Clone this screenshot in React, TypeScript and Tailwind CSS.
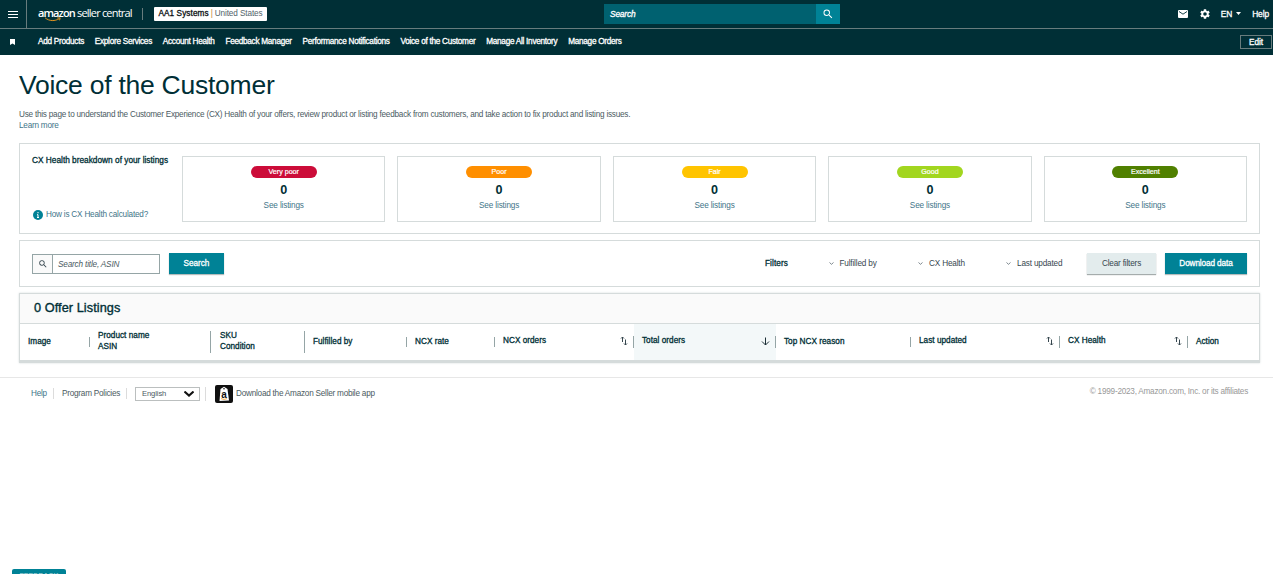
import type { ReactNode } from 'react';

const navLinks = [
  'Add Products',
  'Explore Services',
  'Account Health',
  'Feedback Manager',
  'Performance Notifications',
  'Voice of the Customer',
  'Manage All Inventory',
  'Manage Orders',
];

const healthCards = [
  { label: 'Very poor', count: 0, color: 'bg-[#cc0c39]' },
  { label: 'Poor', count: 0, color: 'bg-[#ff8f00]' },
  { label: 'Fair', count: 0, color: 'bg-[#ffc400]' },
  { label: 'Good', count: 0, color: 'bg-[#a2d61f]' },
  { label: 'Excellent', count: 0, color: 'bg-[#508000]' },
];

// medium weight: regular glyphs with a thin outline
const medium = '[-webkit-text-stroke:0.3px_currentColor]';

function SearchIcon({ className }: { className?: string }) {
  return (
    <svg viewBox="0 0 24 24" fill="currentColor" className={className}>
      <path d="M15.5 14h-.79l-.28-.27A6.471 6.471 0 0 0 16 9.5 6.5 6.5 0 1 0 9.5 16c1.61 0 3.09-.59 4.23-1.57l.27.28v.79l5 4.99L20.49 19l-4.99-5zm-6 0C7.01 14 5 11.99 5 9.5S7.01 5 9.5 5 14 7.01 14 9.5 11.99 14 9.5 14z" />
    </svg>
  );
}

function SortIcon() {
  return (
    <svg viewBox="0 0 8 10" fill="none" stroke="#37474f" strokeWidth="1" className="w-2 h-2.5 mb-0.5 shrink-0">
      <path d="M2.5 6V1M1 2.5L2.5 1L4 2.5M5.5 3.5V9M4 7.5L5.5 9L7 7.5" />
    </svg>
  );
}

function ArrowDownIcon() {
  return (
    <svg viewBox="0 0 9 9" fill="none" stroke="#1c2f36" strokeWidth="1" className="w-[9px] h-[9px] mb-0.5 shrink-0">
      <path d="M4.5 0.5V8M1 4.5L4.5 8L8 4.5" />
    </svg>
  );
}

function TopBar() {
  return (
    <header className="h-[29px] flex items-center bg-[#002f36] border-b border-[#687c7d] text-white">
      <button className="w-[27px] h-7 flex items-center justify-center border-r border-[#687c7d]" aria-label="Menu">
        <svg viewBox="0 0 10 7" className="w-2.5 h-[7px]" stroke="white" strokeWidth="1">
          <path d="M0 0.5H10M0 3.5H10M0 6.5H10" />
        </svg>
      </button>
      <a href="#" className="relative ml-[11px] w-[95px] h-7 flex items-center gap-[3px] pb-[2px] font-['Open_Sans'] text-[11px] whitespace-nowrap">
        <span className="w-[36px] font-semibold tracking-[-0.9px]">amazon</span>
        <span className="tracking-[-0.8px]">seller central</span>
        <svg viewBox="0 0 20 6" fill="none" className="absolute left-[5px] top-[17px] w-5 h-[5px]">
          <path d="M0.5 1C5.5 5.2 12.5 5.2 17.5 2M15 1.2L18.6 1L17.8 4" stroke="#f19a1f" strokeWidth="1.1" />
        </svg>
      </a>
      <span className="ml-[9px] w-px h-3 bg-[#687c7d]" />
      <button className="ml-[11px] w-[113px] h-[14px] flex items-center justify-center bg-white rounded-[1px] pt-px text-[8.2px] tracking-[-0.1px] whitespace-nowrap text-[#52636b]">
        <span className={`${medium} tracking-[0.1px] text-[#0b0f12]`}>AA1 Systems</span>
        <span className="mx-[2px] text-[#c07b3a]">|</span>
        <span>United States</span>
      </button>
      <div className="ml-[337px] flex h-5">
        <div className={`${medium} w-[212px] pl-1.5 flex items-center bg-[#006170] text-[8.4px] italic tracking-[-0.2px]`}>Search</div>
        <button className="w-6 flex items-center justify-center bg-[#008296]" aria-label="Search">
          <SearchIcon className="w-3 h-3" />
        </button>
      </div>
      <div className={`${medium} ml-auto flex items-center pr-1 text-[8.4px] tracking-[-0.1px]`}>
        <svg viewBox="0 0 10 8" className="w-2.5 h-2 mr-3">
          <rect width="10" height="8" rx="1" fill="white" />
          <path d="M1 1.5L5 4.2L9 1.5" fill="none" stroke="#002f36" strokeWidth="0.9" />
        </svg>
        <svg viewBox="2 2 20 20" fill="white" className="w-2.5 h-2.5 mr-[11px]">
          <path d="M19.14 12.94c.04-.3.06-.61.06-.94 0-.32-.02-.64-.07-.94l2.03-1.58a.49.49 0 0 0 .12-.61l-1.92-3.32a.488.488 0 0 0-.59-.22l-2.39.96c-.5-.38-1.03-.7-1.62-.94l-.36-2.54a.484.484 0 0 0-.48-.41h-3.84c-.24 0-.43.17-.47.41l-.36 2.54c-.59.24-1.13.57-1.62.94l-2.39-.96c-.22-.08-.47 0-.59.22L2.74 8.87c-.12.21-.08.47.12.61l2.03 1.58c-.05.3-.09.63-.09.94s.02.64.07.94l-2.03 1.58a.49.49 0 0 0-.12.61l1.92 3.32c.12.22.37.29.59.22l2.39-.96c.5.38 1.03.7 1.62.94l.36 2.54c.05.24.24.41.48.41h3.84c.24 0 .44-.17.47-.41l.36-2.54c.59-.24 1.13-.56 1.62-.94l2.39.96c.22.08.47 0 .59-.22l1.92-3.32a.49.49 0 0 0-.12-.61l-2.01-1.58zM12 15.6A3.6 3.6 0 1 1 12 8.4a3.6 3.6 0 0 1 0 7.2z" />
        </svg>
        <span>EN</span>
        <svg viewBox="0 0 5 3" fill="white" className="w-[5px] h-[3px] ml-1 mr-[11px]">
          <path d="M0 0H5L2.5 3Z" />
        </svg>
        <span>Help</span>
      </div>
    </header>
  );
}

function NavBar() {
  return (
    <nav className={`${medium} h-[26px] flex items-center bg-[#002f36] text-white text-[8.2px]`}>
      <svg viewBox="0 0 5 6" fill="white" className="ml-[10px] mr-[23px] w-[5px] h-1.5">
        <path d="M0 0H5V6L2.5 4.5L0 6Z" />
      </svg>
      <div className="flex gap-[10.8px] tracking-[-0.265px] whitespace-nowrap">
        {navLinks.map((link) => (
          <a key={link} href="#">
            {link}
          </a>
        ))}
      </div>
      <button className="ml-auto mr-px w-8 h-[14px] border border-[#687c7d] leading-[11px]">Edit</button>
    </nav>
  );
}

function HealthBreakdown() {
  return (
    <section className="h-[91px] flex border border-[#d5dbdb] py-3 px-3">
      <div className="w-[150px] flex flex-col justify-between whitespace-nowrap">
        <h2 className={`${medium} leading-2 text-[8.3px] tracking-[0px]`}>CX Health breakdown of your listings</h2>
        <a href="#" className="-mb-px flex items-center text-[8.2px] leading-3.5 tracking-[-0.21px] text-[#3f7589]">
          <svg viewBox="0 0 10 10" className="ml-px mr-[3px] w-2.5 h-2.5">
            <circle cx="5" cy="5" r="5" fill="#008296" />
            <path d="M5 2V3.3M4 4.7H5V7.5M4 7.5H6" fill="none" stroke="white" strokeWidth="1" />
          </svg>
          How is CX Health calculated?
        </a>
      </div>
      <div className="flex-1 flex gap-3">
        {healthCards.map((card) => (
          <div key={card.label} className="flex-1 h-[66px] flex flex-col items-center border border-[#d5dbdb] pt-[9px]">
            <span className={`w-[66px] h-3 rounded-full text-center text-[7.1px] leading-3 text-white [-webkit-text-stroke:0.2px_currentColor] ${card.color}`}>
              {card.label}
            </span>
            <span className="mt-[5px] text-[12.6px] leading-[15px] font-bold">{card.count}</span>
            <a href="#" className="mt-[3px] text-[8.2px] leading-2.5 tracking-[-0.14px] text-[#3f7589]">
              See listings
            </a>
          </div>
        ))}
      </div>
    </section>
  );
}

function FilterMenu({ label, width }: { label: string; width: string }) {
  return (
    <button className={`${width} flex items-center whitespace-nowrap text-[#37474f]`}>
      <svg viewBox="0 0 5 3" fill="none" stroke="#5d6b72" strokeWidth="0.8" className="w-[5px] h-[3px] mr-[6px]">
        <path d="M0.5 0.5L2.5 2.3L4.5 0.5" />
      </svg>
      <span className="pt-px">{label}</span>
    </button>
  );
}

function FilterBar() {
  return (
    <section className="mt-1.5 h-[47px] flex items-center border border-[#d5dbdb] px-3 text-[8.2px] tracking-[-0.17px]">
      <div className="w-32 h-5 flex border border-[#95a5a6]">
        <span className="w-5 flex items-center justify-center border-r border-[#95a5a6] bg-[#fafafa]">
          <SearchIcon className="w-2.5 h-2.5 text-[#37474f]" />
        </span>
        <span className="pl-[5px] leading-[19px] italic text-[#4b5b62]">Search title, ASIN</span>
      </div>
      <button className={`${medium} ml-[9px] w-[55px] h-[21px] pt-px bg-[#008296] shadow-[0_1px_1px_#b5bcbc] text-white tracking-[-0.03px]`}>Search</button>
      <span className={`${medium} ml-auto w-[63.5px] pt-px tracking-[0.1px]`}>Filters</span>
      <FilterMenu label="Fulfilled by" width="w-[89.5px]" />
      <FilterMenu label="CX Health" width="w-[88px]" />
      <FilterMenu label="Last updated" width="w-[81px]" />
      <button className="w-[69px] h-[21px] pt-px bg-[#e3eced] shadow-[0_1px_1px_#a5acac] text-[#37474f]">Clear filters</button>
      <button className={`${medium} ml-[9px] w-[82px] h-[21px] pt-px bg-[#008296] shadow-[0_1px_1px_#b5bcbc] text-white tracking-[-0.1px]`}>Download data</button>
    </section>
  );
}

interface ColumnProps {
  width: string;
  divider?: string;
  className?: string;
  icon?: ReactNode;
  children: ReactNode;
}

function Column({ width, divider, className = '', icon, children }: ColumnProps) {
  return (
    <div className={`${width} ${className} h-full shrink-0 flex items-center whitespace-nowrap`}>
      <div className={`pl-2 flex-1 ${icon ? 'pb-1' : 'pb-[2px]'}`}>{children}</div>
      {icon}
      {divider && <span className={`w-px bg-[#95a5a6] ${divider} ${icon ? 'ml-[5px]' : ''}`} />}
    </div>
  );
}

function OfferListings() {
  return (
    <section className="mt-1.5 h-[70px] border border-[#d5dbdb] border-b-[3px] shadow-[0_0_2px_#d5dbdb]">
      <h2 className="h-[30px] pl-[14px] leading-[29px] bg-[#fafafa] border-b border-[#d5dbdb] text-[12.7px] tracking-[0.08px] [-webkit-text-stroke:0.35px_currentColor]">0 Offer Listings</h2>
      <div className={`${medium} h-9 flex text-[8.2px] leading-[11px] tracking-[0.03px]`}>
        <Column width="w-[70px]" divider="h-2.5">Image</Column>
        <Column width="w-[121px]" divider="h-[22px]">
          Product name
          <br />
          ASIN
        </Column>
        <Column width="w-[94px]" divider="h-[22px]">
          <span className="pl-px">SKU</span>
          <br />
          <span className="pl-px">Condition</span>
        </Column>
        <Column width="w-[102px]" divider="h-2.5">Fulfilled by</Column>
        <Column width="w-[88px]" divider="h-2.5">NCX rate</Column>
        <Column width="w-[139px]" divider="h-3" icon={<SortIcon />}>NCX orders</Column>
        <Column width="w-[142px]" divider="h-3" className="bg-[#f3f8f9]" icon={<ArrowDownIcon />}>Total orders</Column>
        <Column width="w-[135px]" divider="h-2.5">Top NCX reason</Column>
        <Column width="w-[149px]" divider="h-3" icon={<SortIcon />}>Last updated</Column>
        <Column width="w-[128px]" divider="h-3" icon={<SortIcon />}>CX Health</Column>
        <Column width="w-[71px]">Action</Column>
      </div>
    </section>
  );
}

function Footer() {
  return (
    <footer className="mt-[14px] h-8 flex items-center border-t border-[#e7e7e7] pl-[31px] pr-[25px] text-[8.2px] tracking-[-0.235px] text-[#4b5b62] whitespace-nowrap">
      <a href="#" className="w-[22px] pt-px text-[#3f7589]">Help</a>
      <span className="w-px h-[11px] bg-[#dcdcdc]" />
      <a href="#" className="ml-2 w-[64px] pt-px">Program Policies</a>
      <span className="w-px h-[11px] bg-[#dcdcdc]" />
      <button className="ml-2 w-[65px] h-[14px] flex items-center justify-between border border-[#bbbfbf] pl-1.5 pr-[5px] leading-3 text-[7.6px] tracking-[-0.1px]">
        English
        <svg viewBox="0 0 10 6" fill="none" stroke="#111" strokeWidth="2" className="w-2.5 h-1.5">
          <path d="M0.5 0.5L5 4.6L9.5 0.5" />
        </svg>
      </button>
      <span className="ml-[5px] w-px h-[14px] bg-[#dcdcdc]" />
      <svg viewBox="0 0 18 18" className="ml-[9px] w-[18px] h-[18px]">
        <rect width="18" height="18" rx="2" fill="#101010" />
        <path d="M5.5 4L9 1.8L12.5 4L14 15.5L4.5 16Z" fill="white" />
        <circle cx="9" cy="3.8" r="0.8" fill="#101010" />
        <text x="9" y="12.5" textAnchor="middle" fontSize="10" fontWeight="700" fill="#101010">a</text>
        <path d="M6 13.6Q9 15.3 12 13.6" fill="none" stroke="#f19a1f" strokeWidth="0.8" />
      </svg>
      <a href="#" className="ml-[3px] pt-px">Download the Amazon Seller mobile app</a>
      <span className="ml-auto pb-[3px] text-[#999]">© 1999-2023, Amazon.com, Inc. or its affiliates</span>
    </footer>
  );
}

export default function App() {
  return (
    <div className="h-[574px] flex flex-col overflow-hidden bg-white font-['Liberation_Sans',sans-serif] text-[#002f36]">
      <TopBar />
      <NavBar />
      <main className="pl-[19px] pr-[13px]">
        <h1 className="pt-[13px] text-[26.5px] leading-[34px] tracking-[-0.25px]">Voice of the Customer</h1>
        <p className="mt-[7px] mb-3 h-[22px] text-[8.2px] leading-[11px] tracking-[-0.23px] text-[#4b5b62]">
          Use this page to understand the Customer Experience (CX) Health of your offers, review product or listing feedback from customers, and take action to fix product and listing issues.
          <br />
          <a href="#" className="text-[#3f7589]">Learn more</a>
        </p>
        <HealthBreakdown />
        <FilterBar />
        <OfferListings />
      </main>
      <Footer />
      <button className="mt-auto ml-3 w-[54px] h-[5px] overflow-hidden rounded-t-[2px] bg-[#008296] text-[7px] leading-[13px] font-bold text-[#8fc7cf]">
        FEEDBACK
      </button>
    </div>
  );
}
